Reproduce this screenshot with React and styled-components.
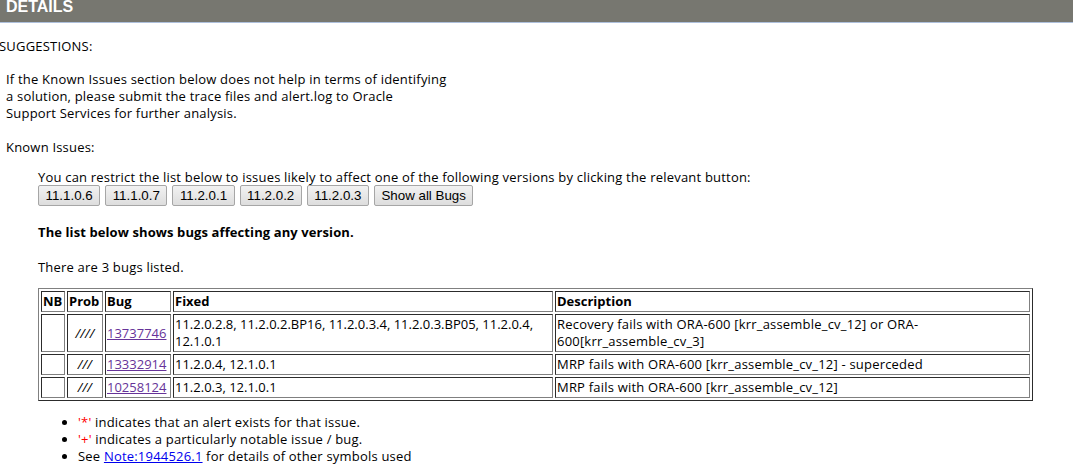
import styled, { createGlobalStyle } from "styled-components";

const GlobalStyle = createGlobalStyle`
  html, body {
    margin: 0;
    padding: 0;
    background: #fff;
  }
  body {
    font-family: "Open Sans", "Noto Sans", sans-serif;
    font-size: 13px;
    line-height: 17px;
    letter-spacing: 0.2px;
    color: #000;
    overflow: hidden;
  }
`;

const bugs = [
  {
    prob: "////",
    id: "13737746",
    fixed: "11.2.0.2.8, 11.2.0.2.BP16, 11.2.0.3.4, 11.2.0.3.BP05, 11.2.0.4, 12.1.0.1",
    desc: "Recovery fails with ORA-600 [krr_assemble_cv_12] or ORA-600[krr_assemble_cv_3]",
  },
  {
    prob: "///",
    id: "13332914",
    fixed: "11.2.0.4, 12.1.0.1",
    desc: "MRP fails with ORA-600 [krr_assemble_cv_12] - superceded",
  },
  {
    prob: "///",
    id: "10258124",
    fixed: "11.2.0.3, 12.1.0.1",
    desc: "MRP fails with ORA-600 [krr_assemble_cv_12]",
  },
];

const versions = ["11.1.0.6", "11.1.0.7", "11.2.0.1", "11.2.0.2", "11.2.0.3", "Show all Bugs"];

const App = () => {
  return (
    <Page>
      <GlobalStyle />
      <Header>DETAILS</Header>
      <Label>SUGGESTIONS:</Label>
      <Para>
        If the Known Issues section below does not help in terms of identifying
        <br />
        a solution, please submit the trace files and alert.log to Oracle
        <br />
        Support Services for further analysis.
      </Para>
      <Para $top={17}>Known Issues:</Para>
      <Indent>
        <div>You can restrict the list below to issues likely to affect one of the following versions by clicking the relevant button:</div>
        <ButtonRow>
          {versions.map((v) => (
            <VersionButton key={v}>{v}</VersionButton>
          ))}
        </ButtonRow>
        <Bold>The list below shows bugs affecting any version.</Bold>
        <Count>There are 3 bugs listed.</Count>
        <BugTable>
          <colgroup>
            <Col $w={24} />
            <Col $w={36} />
            <Col $w={66} />
            <Col $w={380} />
            <Col />
          </colgroup>
          <thead>
            <tr>
              <Th>NB</Th>
              <Th>Prob</Th>
              <Th>Bug</Th>
              <Th>Fixed</Th>
              <Th>Description</Th>
            </tr>
          </thead>
          <tbody>
            {bugs.map((b) => (
              <tr key={b.id}>
                <Td></Td>
                <ProbCell>{b.prob}</ProbCell>
                <Td $tight>
                  <BugLink href="#">{b.id}</BugLink>
                </Td>
                <Td $tight>{b.fixed}</Td>
                <Td>{b.desc}</Td>
              </tr>
            ))}
          </tbody>
        </BugTable>
        <Notes>
          <li>
            <Red>'*'</Red> indicates that an alert exists for that issue.
          </li>
          <li>
            <Red>'+'</Red> indicates a particularly notable issue / bug.
          </li>
          <li>
            See <NoteLink href="#">Note:1944526.1</NoteLink> for details of other symbols used
          </li>
        </Notes>
      </Indent>
    </Page>
  );
};

const Page = styled.div`
  width: 1073px;
  height: 465px;
  overflow: hidden;
`;

const Header = styled.div`
  height: 22px;
  background: #777770;
  border-bottom: 1px solid #aec0dc;
  color: #fff;
  font-family: "Liberation Sans", Arial, sans-serif;
  font-weight: bold;
  font-size: 16px;
  line-height: 14px;
  letter-spacing: 0;
  padding-left: 6px;
  overflow: hidden;
`;

const Label = styled.div`
  margin: 15px 0 0 -1px;
`;

const Para = styled.div`
  margin: ${({ $top }) => $top || 16}px 0 0 6px;
`;

const Indent = styled.div`
  margin: 13px 0 0 38px;
`;

const ButtonRow = styled.div`
  display: flex;
  gap: 5px;
  margin-top: -1px;
`;

const VersionButton = styled.button`
  font-family: "Liberation Sans", Arial, sans-serif;
  font-size: 13.33px;
  letter-spacing: 0;
  height: 21px;
  padding: 0 6.5px;
  border: 1px solid #a6a6a6;
  border-radius: 2px;
  background: linear-gradient(#f2f2f2, #dddddd);
  color: #000;
`;

const Bold = styled.div`
  font-weight: bold;
  letter-spacing: 0.1px;
  margin-top: 18px;
`;

const Count = styled.div`
  margin-top: 18px;
`;

const BugTable = styled.table`
  margin-top: 12px;
  width: 995px;
  table-layout: fixed;
  border: 1px outset grey;
  border-spacing: 2px;
`;

const Col = styled.col`
  width: ${({ $w }) => ($w ? `${$w}px` : "auto")};
`;

const Th = styled.th`
  border: 1px inset grey;
  padding: 1px;
  text-align: left;
  font-weight: bold;
  letter-spacing: 0;
`;

const Td = styled.td`
  border: 1px inset grey;
  padding: 1px;
  text-align: left;
  vertical-align: middle;
  letter-spacing: ${({ $tight }) => ($tight ? "0" : "0.2px")};
`;

const ProbCell = styled(Td)`
  text-align: center;
  font-style: italic;
`;

const BugLink = styled.a`
  color: #663399;
`;

const Notes = styled.ul`
  margin: 13px 0 0 0;
  padding-left: 40px;
`;

const Red = styled.span`
  color: #ff0000;
`;

const NoteLink = styled.a`
  color: #0000ee;
`;

export default App;
